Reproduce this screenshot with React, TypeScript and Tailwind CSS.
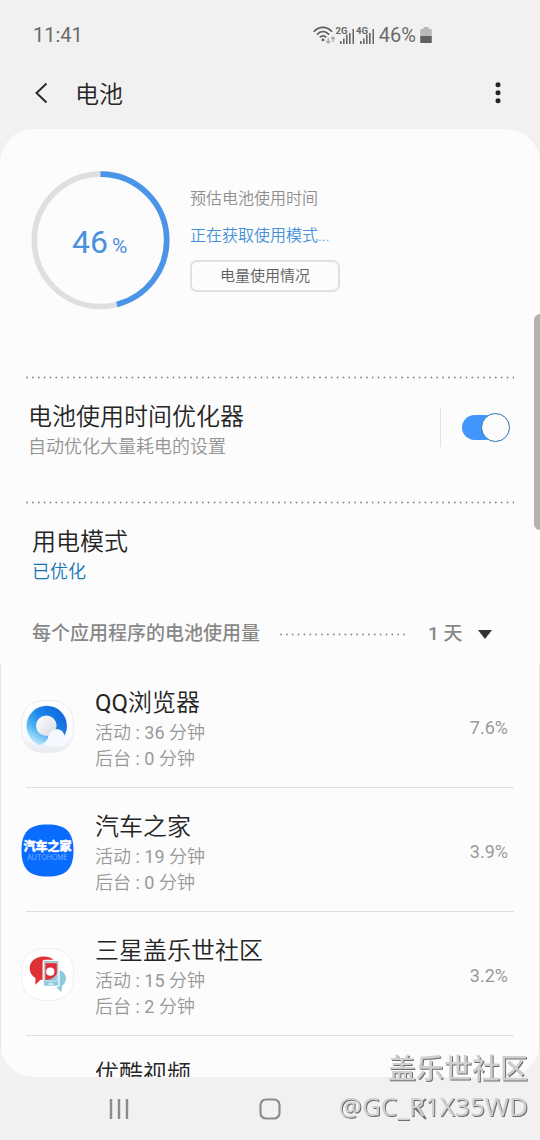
import React from "react";

function DottedLine({ className = "" }: { className?: string }) {
  return (
    <svg className={`h-[3px] ${className}`} aria-hidden="true">
      <line x1="1" y1="1.5" x2="100%" y2="1.5" stroke="#8c8c8c" strokeWidth="1.9" strokeLinecap="round" strokeDasharray="0 5.86" />
    </svg>
  );
}

function StatusIcons() {
  return (
    <svg width="64" height="24" viewBox="0 0 64 24" fill="none" aria-hidden="true">
      <g stroke="#5c5c5c" strokeWidth="1.6">
        <path d="M.8 8.7C6 2.9 13.800 2.900 19 8.700" />
        <path d="M3.800 11.600C7.800 7.400 12.200 7.400 16.200 11.600" />
        <path d="M6.800 14.400C9.100 12.200 11 12.200 13.300 14.400" />
      </g>
      <circle cx="10" cy="16.900" r="1.400" fill="#5c5c5c" />
      <path d="M15.200 15v5M13.300 18l1.900 2 1.900-2M20 19v-5M18.100 16l1.900-2 1.900 2" stroke="#a8a8a8" strokeWidth="1.300" />
      <g fill="#666">
        <text x="22.500" y="11" fontSize="9.500" fontWeight="700" fontFamily="Roboto, sans-serif">2G</text>
        <path d="M27 18h1.600v3H27zM30 15.500h1.600V21H30zM33 11.500h1.600V21H33zM36 10h1.600v11H36zM39.500 6H41v15h-1.500z" />
        <text x="43" y="11" fontSize="9.500" fontWeight="700" fontFamily="Roboto, sans-serif">4G</text>
        <path d="M47 18h1.600v3H47zM50 15.500h1.600V21H50zM53 11.500h1.600V21H53zM56 10h1.600v11H56zM59.500 6H61v15h-1.500z" />
      </g>
    </svg>
  );
}

function BatteryIcon() {
  return (
    <svg width="12" height="18" viewBox="0 0 12 18" aria-hidden="true">
      <path d="M3.500 1h5v2H11a.8.8 0 0 1 .8.8V10H.2V3.800A.8.8 0 0 1 1 3h2.500z" fill="#b9b9b9" />
      <path d="M.2 10h11.600v6.200a.8.8 0 0 1-.8.8H1a.8.8 0 0 1-.8-.8z" fill="#616161" />
    </svg>
  );
}

const SQUIRCLE = "M26.500 .5C45 .5 52.500 8 52.500 26.500S45 52.500 26.500 52.500 .5 45 .5 26.500 8 .5 26.500 .5z";

function BrowserIcon() {
  return (
    <svg width="53" height="53" viewBox="0 0 53 53" aria-hidden="true">
      <defs>
        <linearGradient id="plate" x1="0" y1="0" x2="0" y2="1">
          <stop offset="0" stopColor="#ffffff" />
          <stop offset=".7" stopColor="#fafbfc" />
          <stop offset="1" stopColor="#e6e9ef" />
        </linearGradient>
        <linearGradient id="ring" x1=".9" y1=".2" x2=".1" y2=".85">
          <stop offset="0" stopColor="#1068de" />
          <stop offset=".5" stopColor="#1e8cea" />
          <stop offset="1" stopColor="#7fd6fb" />
        </linearGradient>
        <linearGradient id="core" x1="0" y1="0" x2="1" y2="1">
          <stop offset="0" stopColor="#ffffff" />
          <stop offset="1" stopColor="#d5dae2" />
        </linearGradient>
        <linearGradient id="haze" x1=".6" y1="0" x2=".4" y2="1">
          <stop offset=".6" stopColor="#fff" stopOpacity="0" />
          <stop offset="1" stopColor="#fff" stopOpacity=".5" />
        </linearGradient>
        <linearGradient id="cloud" x1="0" y1="0" x2="1" y2="0">
          <stop offset="0" stopColor="#f3f9fe" stopOpacity="0" />
          <stop offset=".4" stopColor="#f3f9fe" />
        </linearGradient>
      </defs>
      <path d={SQUIRCLE} fill="url(#plate)" stroke="#ececf0" />
      <circle cx="25.700" cy="26" r="20.200" fill="url(#ring)" />
      <circle cx="25.700" cy="26" r="20.200" fill="url(#haze)" />
      <circle cx="25.300" cy="25.800" r="10.300" fill="url(#core)" />
      <path d="M12 46.300c8-.5 13-4 15-8.300 .5-5.200 4-8.700 8.700-8.700 4.300 0 6.900 2.600 7.700 6 2.300.7 3.600 2.700 3.600 5.100 0 3.500-2.500 5.900-6 5.900z" fill="url(#cloud)" />
    </svg>
  );
}

function AutohomeIcon() {
  return (
    <svg width="53" height="53" viewBox="0 0 53 53" aria-hidden="true">
      <path d={SQUIRCLE} fill="#0a6cff" />
      <text x="26.500" y="27" textAnchor="middle" fontSize="12" fontWeight="900" fill="#fff" stroke="#fff" strokeWidth=".4" fontFamily="'Noto Sans CJK SC', sans-serif">汽车之家</text>
      <text x="26.500" y="36" textAnchor="middle" fontSize="7" fill="#78b0ff" fontFamily="Inter, sans-serif">AUTOHOME</text>
    </svg>
  );
}

function CommunityIcon() {
  return (
    <svg width="53" height="53" viewBox="0 0 53 53" aria-hidden="true">
      <path d={SQUIRCLE} fill="#fff" stroke="#efefef" />
      <path d="M36 22c5.500 0 9 3.800 9 8.500 0 3.200-1.600 5.800-4 7.400l-.6 6.300-5.400-5.400c-6-.2-10-3.600-10-8.300S30 22 36 22z" fill="#8ec9de" />
      <path d="M22.500 8.500c8 0 14 4.800 14 11.500s-6 12-13.500 12l-3.500-.2-5.200 5 .2-6.800C10.800 27.800 8.700 24.400 8.700 20.200c0-6.700 6-11.700 13.800-11.700z" fill="#df3038" />
      <rect x="22.200" y="12.300" width="15.800" height="26" rx="1.500" fill="#8ec9de" stroke="#fff" strokeWidth="1.300" />
      <path d="M24 14.800h12.300V25c-2 4.200-6.500 7-12.300 7z" fill="#df3038" />
      <path d="M24 14.800h12.300v18.400H24z" fill="none" stroke="#fff" strokeWidth=".5" />
      <circle cx="29.300" cy="23.700" r="4.100" fill="#fff" />
      <path d="M27.500 36h5" stroke="#fff" strokeWidth="1.200" />
    </svg>
  );
}

const apps = [
  { name: "QQ浏览器", active: "36", background: "0", percent: "7.6%", icon: <BrowserIcon /> },
  { name: "汽车之家", active: "19", background: "0", percent: "3.9%", icon: <AutohomeIcon /> },
  { name: "三星盖乐世社区", active: "15", background: "2", percent: "3.2%", icon: <CommunityIcon /> },
];

export default function App() {
  return (
    <div className="relative flex h-screen flex-col overflow-hidden bg-[#f1f1f1] font-[Roboto,'Noto_Sans_CJK_SC',sans-serif] text-[#252525]">
      <div className="flex h-[68px] shrink-0 items-center justify-between pt-[2px] pr-[108px] pl-[33px] text-[20px] text-[#6a6a6a]">
        <span>11:41</span>
        <div className="flex items-center">
          <StatusIcons />
          <span className="ml-[2px]">46%</span>
          <span className="ml-1"><BatteryIcon /></span>
        </div>
      </div>

      <header className="flex h-[61px] shrink-0 items-start pr-[34px] pl-[33px]">
        <button aria-label="返回" className="mt-3 w-[18px]">
          <svg width="18" height="26" viewBox="0 0 18 26" fill="none" aria-hidden="true">
            <path d="M13.500 3.500 3.500 13l10 9.500" stroke="#252525" strokeWidth="1.900" />
          </svg>
        </button>
        <h1 className="mt-[10px] ml-6 flex-1 text-[24px] leading-[34px] font-[350]">电池</h1>
        <button aria-label="更多选项" className="mt-3">
          <svg width="16" height="26" viewBox="0 0 16 26" fill="#252525" aria-hidden="true">
            <circle cx="8" cy="4.700" r="2.500" />
            <circle cx="8" cy="12.700" r="2.500" />
            <circle cx="8" cy="20.700" r="2.500" />
          </svg>
        </button>
      </header>

      <main className="min-h-0 flex-1 overflow-y-auto rounded-[34px] bg-[#fcfcfc] [scrollbar-width:none]">
        <section className="flex h-[247px] pt-[41px] pl-[30px]">
          <svg width="140" height="140" viewBox="0 0 140 140" fill="none" role="img" aria-label="46%">
            <circle cx="70.500" cy="70.300" r="66.200" stroke="#dfdfdf" strokeWidth="5.600" />
            <circle cx="70.500" cy="70.300" r="66.200" stroke="#4b95e9" strokeWidth="5.600" pathLength="100" strokeDasharray="46 54" transform="rotate(-90 70.500 70.300)" />
            <text x="42" y="83" fontSize="32" fill="#4b90dc" className="font-[Roboto,sans-serif]">46</text>
            <text x="82" y="83" fontSize="21" fill="#4b90dc" className="font-[Roboto,sans-serif]">%</text>
          </svg>
          <div className="ml-5 flex flex-col items-start pt-[17px] text-[16px] font-[350]">
            <p className="leading-6 text-[#8f8f8f]">预估电池使用时间</p>
            <p className="mt-[13px] leading-6 text-[#4791da]">正在获取使用模式...</p>
            <button className="mt-3 h-8 w-[150px] rounded-[7px] border-2 border-[#e0e0e0] text-[15px] leading-6 text-[#606060]">电量使用情况</button>
          </div>
        </section>

        <DottedLine className="mx-[26px] block w-[calc(100%-52px)]" />

        <section className="flex h-[122px] items-start justify-between pr-[30px] pl-[28px]">
          <div className="pt-[21px]">
            <h2 className="text-[24px] leading-[34px] font-[350]">电池使用时间优化器</h2>
            <p className="text-[18px] leading-[26px] font-[350] text-[#949494]">自动优化大量耗电的设置</p>
          </div>
          <div className="mt-[29px] flex items-center border-l border-[#e2e2e2] py-[5px] pl-[21px]">
            <input
              type="checkbox"
              role="switch"
              defaultChecked
              aria-label="电池使用时间优化器"
              className="flex h-[29px] w-12 appearance-none items-center before:h-[25px] before:w-9 before:rounded-full before:bg-[#4295fb] after:-ml-[17px] after:size-[29px] after:rounded-full after:border after:border-[#2b70b5] after:bg-[#fcfcfc]"
            />
          </div>
        </section>

        <DottedLine className="mx-[26px] block w-[calc(100%-52px)]" />

        <section className="px-8 pt-[21px]">
          <h2 className="text-[24px] leading-[34px] font-[350]">用电模式</h2>
          <p className="text-[18px] leading-[26px] font-[350] text-[#1576b5]">已优化</p>
        </section>

        <div className="flex h-[79px] items-center px-8 pt-5 text-[19px] font-medium text-[#888]">
          <h3>每个应用程序的电池使用量</h3>
          <DottedLine className="ml-5 min-w-0 flex-1" />
          <label className="ml-5 flex items-center pr-4">
            <select aria-label="时间范围" className="w-[50px] appearance-none bg-transparent">
              <option>1 天</option>
            </select>
            <svg width="14" height="10" viewBox="0 0 14 10" aria-hidden="true">
              <path d="M0 0h14L7 9z" fill="#333" />
            </svg>
          </label>
        </div>

        <ul className="border-x border-[#e4e4e4] pr-[25px] pl-5 font-[Roboto,'Noto_Sans_CJK_SC_DemiLight','Noto_Sans_CJK_SC',sans-serif]">
          {apps.map((app) => (
            <li key={app.name} className="relative flex h-[124px] items-center pr-[6px]">
              {app.icon}
              <div className="ml-[21px] flex-1 pt-[6px]">
                <h4 className="text-[24px] leading-[34px]">{app.name}</h4>
                <p className="text-[18px] leading-[26px] text-[#999]">活动 : {app.active} 分钟</p>
                <p className="text-[18px] leading-[26px] text-[#999]">后台 : {app.background} 分钟</p>
              </div>
              <span className="pt-[2px] text-[18px] text-[#999]">{app.percent}</span>
              <span className="absolute right-0 bottom-0 left-[5px] h-[1px] bg-[#dedede]" />
            </li>
          ))}
          <li className="pt-[21px] pl-[74px]">
            <h4 className="text-[24px] leading-[34px]">优酷视频</h4>
          </li>
        </ul>
      </main>

      <nav className="grid h-[63px] shrink-0 grid-cols-3 items-center px-11">
        <button aria-label="最近使用" className="flex justify-center">
          <svg width="22" height="22" viewBox="0 0 22 22" stroke="#8c8c8c" strokeWidth="2.400" aria-hidden="true">
            <path d="M3 1v20M11 1v20M19 1v20" />
          </svg>
        </button>
        <button aria-label="主屏幕" className="flex justify-center">
          <svg width="22" height="22" viewBox="0 0 22 22" fill="none" aria-hidden="true">
            <rect x="1.500" y="1.500" width="19" height="19" rx="5.500" stroke="#8c8c8c" strokeWidth="2.200" />
          </svg>
        </button>
        <button aria-label="后退" className="flex justify-center">
          <svg width="22" height="22" viewBox="0 0 22 22" fill="none" aria-hidden="true">
            <path d="M16 1 6 11l10 10" stroke="#777" strokeWidth="2.200" />
          </svg>
        </button>
      </nav>

      <div className="absolute top-[314px] right-0 h-[216px] w-[6px] rounded-l-[6px] bg-[#b4b3ae]" />

      <div className="pointer-events-none absolute right-3 bottom-4 text-right leading-9 text-[#cfcfcf] [text-shadow:1px_1px_0_#6c6c6c]">
        <p className="text-[28px] font-medium">盖乐世社区</p>
        <p className="font-['Noto_Sans',sans-serif] text-[26px]">@GC_R1X35WD</p>
      </div>
    </div>
  );
}
